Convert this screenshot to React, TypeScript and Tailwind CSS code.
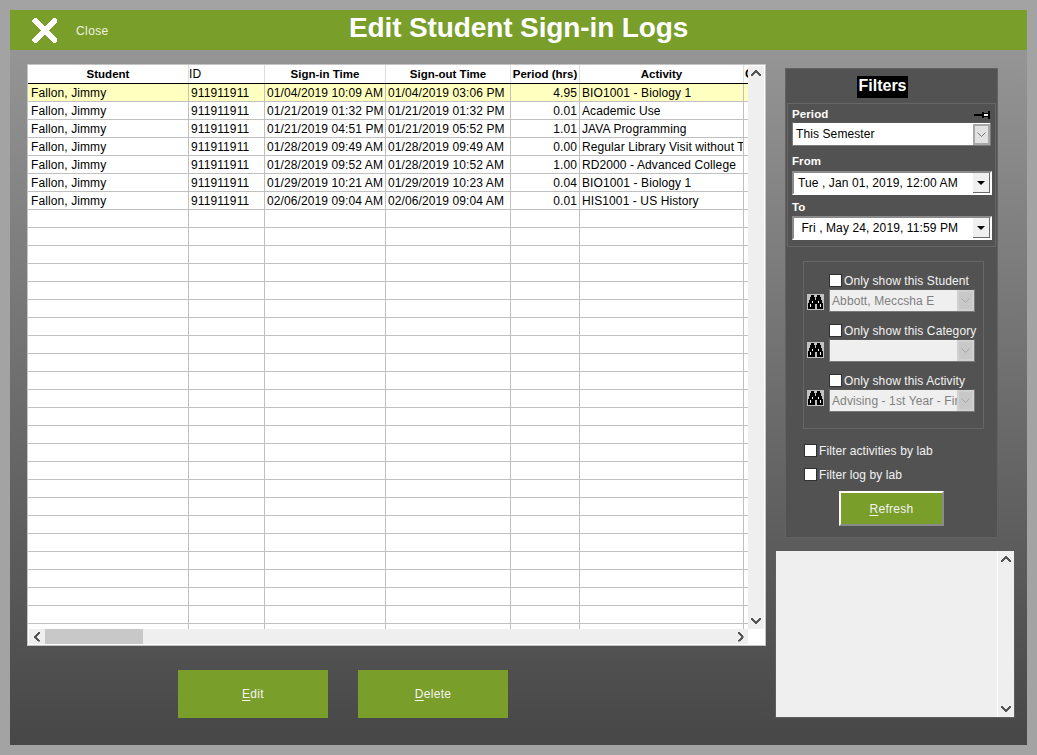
import React from 'react';

const COLS = [
  { label: 'Student', w: 'w-[161px]', head: 'text-center font-bold text-[11.5px] tracking-normal', cell: 'pl-[3px]' },
  { label: 'ID', w: 'w-[76px]', head: 'text-left', cell: '' },
  { label: 'Sign-in Time', w: 'w-[121px]', head: 'text-center font-bold text-[11.5px] tracking-normal', cell: '' },
  { label: 'Sign-out Time', w: 'w-[125px]', head: 'text-center font-bold text-[11.5px] tracking-normal', cell: '' },
  { label: 'Period (hrs)', w: 'w-[69px]', head: 'text-center font-bold text-[11.5px] tracking-normal', cell: 'text-right' },
  { label: 'Activity', w: 'w-[164px]', head: 'text-center font-bold text-[11.5px] tracking-normal', cell: '' },
];

const LOGS = [
  ['Fallon, Jimmy', '911911911', '01/04/2019 10:09 AM', '01/04/2019 03:06 PM', '4.95', 'BIO1001 - Biology 1'],
  ['Fallon, Jimmy', '911911911', '01/21/2019 01:32 PM', '01/21/2019 01:32 PM', '0.01', 'Academic Use'],
  ['Fallon, Jimmy', '911911911', '01/21/2019 04:51 PM', '01/21/2019 05:52 PM', '1.01', 'JAVA Programming'],
  ['Fallon, Jimmy', '911911911', '01/28/2019 09:49 AM', '01/28/2019 09:49 AM', '0.00', 'Regular Library Visit without T'],
  ['Fallon, Jimmy', '911911911', '01/28/2019 09:52 AM', '01/28/2019 10:52 AM', '1.00', 'RD2000 - Advanced College'],
  ['Fallon, Jimmy', '911911911', '01/29/2019 10:21 AM', '01/29/2019 10:23 AM', '0.04', 'BIO1001 - Biology 1'],
  ['Fallon, Jimmy', '911911911', '02/06/2019 09:04 AM', '02/06/2019 09:04 AM', '0.01', 'HIS1001 - US History'],
];

const EMPTY_ROWS = Array.from({ length: 24 }, (_, i) => i);

function Chevron({ dir, className = '' }: { dir: 'up' | 'down' | 'left' | 'right'; className?: string }) {
  const rotate = { up: 'rotate-180', down: '', left: 'rotate-90', right: '-rotate-90' }[dir];
  return (
    <svg viewBox="0 0 10 7" className={`w-[10px] h-[7px] ${rotate} ${className}`} shapeRendering="crispEdges">
      <path d="M0 1h2v1h1v1h1v1h2V3h1V2h1V1h2v2H9v1H8v1H7v1H6v1H4V6H3V5H2V4H1V3H0z" fill="#555555" />
    </svg>
  );
}

function Binoculars() {
  return (
    <div className="w-[17px] h-[16px] bg-[#c0c0c0] flex items-center justify-center shrink-0">
      <svg viewBox="0 0 17 16" className="w-[17px] h-[16px]" shapeRendering="crispEdges">
        <path d="M4 1h3v2h1v3h1V3h1V1h3v2h1v3h1v3h1v6h-6V10H8v5H1V9h1V6h1V3h1z" fill="#000" />
        <path d="M3 10h1v3H3zM5 7h1v2H5zM13 10h1v3h-1zM11 7h1v2h-1z" fill="#fff" />
      </svg>
    </div>
  );
}

function PinIcon() {
  return (
    <svg viewBox="0 0 16 9" className="w-[16px] h-[9px]" shapeRendering="crispEdges">
      <path d="M0 3h8v2H0zM8 1h2v6H8zM10 2h4v1h-4zM10 5h4v1h-4zM14 0h2v8h-2z" fill="#000" />
      <path d="M10 3h4v2h-4z" fill="#f2f2f2" />
    </svg>
  );
}

function DropSelect({ value, disabled }: { value: string; disabled?: boolean }) {
  return (
    <div
      className={`flex items-center border border-[#7a7a7a] border-t-[#5a5a5a] ${
        disabled ? 'h-[23px] bg-[#efefef] text-[#7f7f7f] w-[146px]' : 'h-[24px] bg-white text-black w-[199px]'
      }`}
    >
      <span className={`flex-1 min-w-0 overflow-hidden whitespace-nowrap ${disabled ? 'pl-[2px]' : 'pl-[3px]'}`}>{value}</span>
      <span
        className={`w-[17px] h-[21px] shrink-0 flex items-center justify-center border-2 ${
          disabled ? 'bg-[#c8c8c8] border-[#d0d0d0]' : 'bg-[#e2e2e2] border-[#a8a8a8]'
        }`}
      >
        <svg viewBox="0 0 9 5" className="w-[9px] h-[5px]">
          <path d="M0.5 0.5L4.5 4.5L8.5 0.5" fill="none" stroke={disabled ? '#a8a8a8' : '#777777'} />
        </svg>
      </span>
    </div>
  );
}

function DateBox({ value }: { value: string }) {
  return (
    <div className="w-[200px] h-[24px] bg-white flex items-center border-2 border-t-[#8a8a8a] border-l-[#8a8a8a] border-r-white border-b-white">
      <span className="flex-1 whitespace-pre pl-[4px] text-black">{value}</span>
      <span className="w-[17px] h-[20px] flex items-center justify-center bg-[#f0f0f0] border-r border-b border-[#696969]">
        <span className="w-0 h-0 border-x-[4px] border-x-transparent border-t-[4px] border-t-black" />
      </span>
    </div>
  );
}

function CheckLine({ label }: { label: string }) {
  return (
    <div className="flex items-center h-[14px] text-[#f2f2f2]">
      <span className="w-[13px] h-[13px] bg-white border border-[#303030] shrink-0" />
      <span className="ml-[2px] pt-[2px] whitespace-nowrap">{label}</span>
    </div>
  );
}

function FilterGroup({ label, value, iconOffset }: { label: string; value: string; iconOffset: string }) {
  return (
    <div className="flex">
      <div className={`w-[25px] pl-[3px] ${iconOffset}`}>
        <Binoculars />
      </div>
      <div className="flex flex-col gap-[2px]">
        <CheckLine label={label} />
        <DropSelect value={value} disabled />
      </div>
    </div>
  );
}

function LogGrid() {
  return (
    <div className="w-[739px] h-[582px] border border-[#c4c4c4] bg-white flex flex-col">
      <div className="h-[564px] flex pr-[1px]">
        <div className="w-[720px] overflow-hidden">
          <div className="flex h-[19px] leading-[18px] border-b border-black text-black">
            {COLS.map((c) => (
              <div key={c.label} className={`${c.w} shrink-0 border-r border-[#dddddd] whitespace-nowrap ${c.head}`}>
                {c.label}
              </div>
            ))}
            <div className="w-[40px] shrink-0 pl-[1px] font-bold whitespace-nowrap">Category</div>
          </div>
          {LOGS.map((row, i) => (
            <div key={i} className={`flex h-[18px] leading-[17px] border-b border-[#c0c0c0] ${i === 0 ? 'bg-[#ffffc0]' : ''}`}>
              {row.map((val, j) => (
                <div
                  key={j}
                  className={`${COLS[j].w} shrink-0 border-r border-[#c0c0c0] px-[2px] pt-[1px] overflow-hidden whitespace-nowrap ${COLS[j].cell}`}
                >
                  {val}
                </div>
              ))}
            </div>
          ))}
          {EMPTY_ROWS.map((i) => (
            <div key={i} className="flex h-[18px] border-b border-[#c0c0c0]">
              {COLS.map((c) => (
                <div key={c.label} className={`${c.w} shrink-0 border-r border-[#c0c0c0]`} />
              ))}
            </div>
          ))}
        </div>
        <div className="w-[16px] mt-[1px] bg-[#efefef] flex flex-col items-center justify-between pt-[4px] pb-[5px]">
          <Chevron dir="up" />
          <Chevron dir="down" />
        </div>
      </div>
      <div className="flex h-[16px] pb-[1px]">
        <div className="w-[719px] ml-[1px] bg-[#efefef] flex items-center">
          <div className="w-[16px] flex justify-center">
            <Chevron dir="left" />
          </div>
          <div className="w-[98px] h-full bg-[#c8c8c8]" />
          <div className="flex-1" />
          <div className="w-[16px] flex justify-center">
            <Chevron dir="right" />
          </div>
        </div>
      </div>
    </div>
  );
}

function ActionButton({ letter, rest }: { letter: string; rest: string }) {
  return (
    <button className="w-[150px] h-[48px] bg-[#7a9e2a] text-[#f4f4f4] tracking-[0.3px]">
      <span className="underline underline-offset-2">{letter}</span>
      {rest}
    </button>
  );
}

export default function App() {
  return (
    <div className="w-[1037px] h-[755px] bg-[#a3a3a3] p-[10px] overflow-hidden font-['Liberation_Sans',Arial,sans-serif] text-[12px] tracking-[0.1px]">
      <div className="w-[1017px] h-[735px] flex flex-col bg-gradient-to-b from-[#9a9a9a] to-[#474747]">
        {/* TITLE BAR */}
        <header className="h-[40px] bg-[#7a9e2a] flex items-center shrink-0">
          <div className="w-[339px] flex items-center">
            <svg viewBox="0 0 25 25" className="w-[25px] h-[25px] ml-[22px]" shapeRendering="crispEdges">
              <path d="M0 2L2 0h2L12.5 8.5L21 0h2l2 2v2L16.5 12.5L25 21v2l-2 2h-2L12.5 16.5L4 25H2l-2-2v-2L8.5 12.5L0 4z" fill="#fff" />
            </svg>
            <span className="ml-[19px] pt-[2px] text-[#eef2e0] tracking-[0.4px]">Close</span>
          </div>
          <h1 className="text-white font-bold text-[28px] leading-none tracking-[-0.12px] whitespace-nowrap mt-[-5px]">
            Edit Student Sign-in Logs
          </h1>
        </header>

        <div className="flex flex-1 min-h-0">
          {/* LEFT */}
          <div className="w-[765px] pl-[17px] pt-[14px]">
            <LogGrid />
            <div className="flex gap-[30px] ml-[151px] mt-[24px]">
              <ActionButton letter="E" rest="dit" />
              <ActionButton letter="D" rest="elete" />
            </div>
          </div>

          {/* RIGHT */}
          <div className="w-[240px]">
            <div className="w-[213px] h-[470px] ml-[10px] mt-[18px] bg-[#525252] border border-[#626262] flex flex-col">
              <div className="flex justify-center pt-[7px] pb-[5px] pr-[18px]">
                <span className="bg-black text-white font-bold text-[16px] leading-[20px] pb-[2px] tracking-normal px-[1px]">Filters</span>
              </div>

              <div className="mx-[1px] h-[144px] border border-[#666666] px-[4px] text-white flex flex-col">
                <div className="flex items-center justify-between h-[18px] pt-[4px] pr-[1px] font-bold text-[11.5px]">
                  <span>Period</span>
                  <PinIcon />
                </div>
                <DropSelect value="This Semester" />
                <div className="mt-[6px] h-[19px] leading-[18px] font-bold text-[11.5px]">From</div>
                <DateBox value="Tue , Jan 01, 2019, 12:00 AM" />
                <div className="mt-[3px] h-[18px] leading-[18px] font-bold text-[11.5px]">To</div>
                <DateBox value=" Fri , May 24, 2019, 11:59 PM" />
              </div>

              <div className="ml-[17px] mt-[14px] w-[181px] h-[168px] border border-[#666666] pt-[11px] flex flex-col gap-[11px]">
                <FilterGroup label="Only show this Student" value="Abbott, Meccsha E" iconOffset="pt-[21px]" />
                <FilterGroup label="Only show this Category" value="" iconOffset="pt-[19px]" />
                <FilterGroup label="Only show this Activity" value="Advising - 1st Year - First Sem" iconOffset="pt-[17px]" />
              </div>

              <div className="ml-[18px] mt-[14px] flex flex-col gap-[10px]">
                <CheckLine label="Filter activities by lab" />
                <CheckLine label="Filter log by lab" />
              </div>

              <button className="self-start ml-[53px] mt-[10px] w-[105px] h-[35px] bg-[#7a9e2a] border-2 border-t-white border-l-white border-r-[#8a8a8a] border-b-[#8a8a8a] text-[#f4f4f4] tracking-[0.3px]">
                <span className="underline underline-offset-2">R</span>efresh
              </button>
            </div>

            <div className="w-[240px] h-[167px] mt-[13px] bg-[#efefef] border-l border-r border-b border-[#5e5e5e] flex justify-end">
              <div className="w-[17px] border-l border-white flex flex-col items-center justify-between py-[5px]">
                <Chevron dir="up" />
                <Chevron dir="down" />
              </div>
            </div>
          </div>
        </div>
      </div>
    </div>
  );
}
